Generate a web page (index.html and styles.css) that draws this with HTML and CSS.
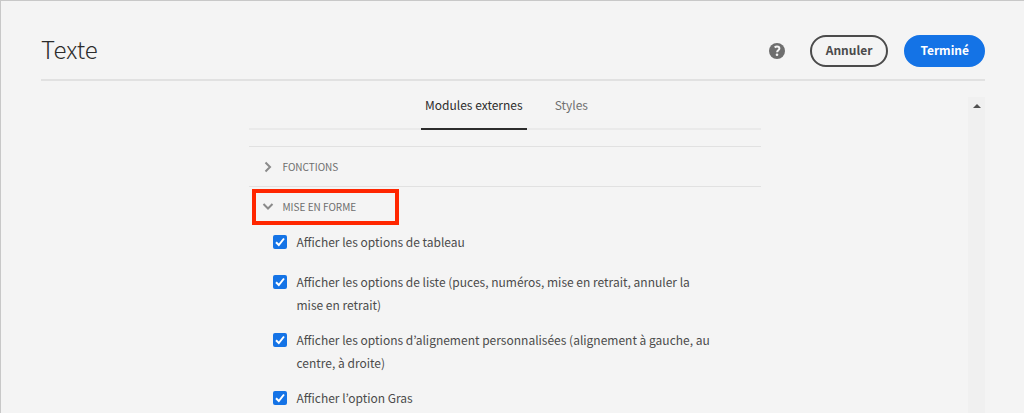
FILE: index.html
```html
<!DOCTYPE html>
<html lang="fr">
<head>
<meta charset="utf-8">
<meta name="viewport" content="width=device-width, initial-scale=1">
<title>Texte</title>
<link rel="stylesheet" href="styles.css">
</head>
<body>
<div class="page">
  <header class="header">
    <h1 class="title">Texte</h1>
    <div class="actions">
      <button class="help" type="button" aria-label="Aide">
        <svg viewBox="0 0 16 16" width="16" height="16" aria-hidden="true">
          <circle cx="8" cy="8" r="8" fill="#6e6e6e"/>
          <path d="M5.7 4.5C6.4 3.8 7.2 3.5 8 3.5c1.400 0 2.400.8 2.400 2 0 1.700-2.300 1.900-2.300 3.700" fill="none" stroke="#f4f4f4" stroke-width="2"/>
          <circle cx="8" cy="11.700" r="1.300" fill="#f4f4f4"/>
        </svg>
      </button>
      <button class="button" type="button">Annuler</button>
      <button class="button primary" type="button">Terminé</button>
    </div>
  </header>
  <div class="body">
    <main class="column">
      <div class="tabs" role="tablist">
        <button class="tab selected" type="button" role="tab" aria-selected="true">Modules externes</button>
        <button class="tab" type="button" role="tab" aria-selected="false">Styles</button>
      </div>
      <section class="group">
        <button class="group-head" type="button" aria-expanded="false">
          <svg class="chevron" viewBox="0 0 12 12" width="12" height="12" aria-hidden="true"><path d="M3.500 1.500 8 6 3.500 10.500"/></svg>
          <span>FONCTIONS</span>
        </button>
      </section>
      <section class="group">
        <button class="group-head marked" type="button" aria-expanded="true">
          <svg class="chevron" viewBox="0 0 12 12" width="12" height="12" aria-hidden="true"><path d="M1.500 4 6 8.500 10.500 4"/></svg>
          <span>MISE EN FORME</span>
        </button>
        <div class="options">
          <label class="option"><input type="checkbox" checked><span>Afficher les options de tableau</span></label>
          <label class="option"><input type="checkbox" checked><span>Afficher les options de liste (puces, numéros, mise en retrait, annuler la mise en retrait)</span></label>
          <label class="option"><input type="checkbox" checked><span>Afficher les options d’alignement personnalisées (alignement à gauche, au centre, à droite)</span></label>
          <label class="option"><input type="checkbox" checked><span>Afficher l’option Gras</span></label>
        </div>
      </section>
    </main>
    <div class="scrollbar" aria-hidden="true">
      <svg viewBox="0 0 8 4" width="8" height="4"><path d="M4 0 8 4H0z" fill="#505050"/></svg>
    </div>
  </div>
</div>
</body>
</html>
```
FILE: styles.css
```css
* {
  box-sizing: border-box;
}

body {
  margin: 0;
  background: #f4f4f4;
  color: #4b4b4b;
  font-family: "Noto Sans CJK KR", "Noto Sans", sans-serif;
  font-size: 12px;
  line-height: 23px;
}

button {
  margin: 0;
  padding: 0;
  border: 0;
  background: none;
  color: inherit;
  font: inherit;
}

.page {
  display: flex;
  flex-direction: column;
  height: 100vh;
  overflow: hidden;
  padding: 0 39px 0 40px;
  border-top: 1px solid #c8c8c8;
  border-left: 1px solid #c8c8c8;
}

.header {
  display: flex;
  flex: none;
  align-items: center;
  justify-content: space-between;
  padding: 32px 0 10px;
  border-bottom: 2px solid #e1e1e1;
}

.title {
  margin: 0;
  padding-bottom: 4px;
  color: #2c2c2c;
  font-size: 24px;
  font-weight: 200;
  line-height: 32px;
}

.actions {
  display: flex;
  align-items: center;
  gap: 16px;
}

.help {
  display: flex;
  margin-right: 9px;
}

.button {
  height: 32px;
  padding: 0 14px 2px;
  border: 2px solid #4b4b4b;
  border-radius: 16px;
  font-weight: 700;
  line-height: 26px;
}

.primary {
  border-color: #1473e6;
  background: #1473e6;
  color: #fff;
}

.body {
  display: flex;
  flex: 1;
  min-height: 0;
}

.column {
  width: 100%;
  max-width: 512px;
  margin: 0 auto;
}

.tabs {
  display: flex;
  justify-content: center;
  gap: 24px;
  margin-bottom: 16px;
  padding-left: 4px;
  border-bottom: 2px solid #eaeaea;
}

.tab {
  height: 49px;
  margin-bottom: -2px;
  padding: 0 4px;
  border-bottom: 2px solid transparent;
  color: #707070;
}

.selected {
  border-color: #2c2c2c;
  color: #2c2c2c;
}

.group {
  border-top: 1px solid #e1e1e1;
}

.group-head {
  display: flex;
  align-items: center;
  gap: 9px;
  height: 39px;
  padding-left: 13px;
  color: #6e6e6e;
  font-size: 10px;
}

.chevron {
  fill: none;
  stroke: #8a8a8a;
  stroke-width: 2;
}

.marked {
  width: 147px;
  height: 36px;
  margin: 2px 0 0 3px;
  padding: 0 0 2px 6px;
  border: 4px solid #ff2600;
}

.options {
  padding: 5px 46px 0 24px;
}

.option {
  display: flex;
  gap: 10px;
  min-height: 40px;
  padding-bottom: 12px;
}

.option input {
  flex: none;
  width: 14px;
  height: 14px;
  margin: 5px 0 0;
  border-radius: 2px;
  appearance: none;
  background: #1473e6 url("data:image/svg+xml,%3Csvg xmlns='http://www.w3.org/2000/svg' viewBox='0 0 14 14'%3E%3Cpath d='M3 7.200 5.800 10 11 3.500' fill='none' stroke='white' stroke-width='2'/%3E%3C/svg%3E");
}

.scrollbar {
  display: flex;
  flex: none;
  align-items: flex-start;
  justify-content: center;
  width: 17px;
  margin-top: 16px;
  padding-top: 7px;
  background: #f0f0f0;
}
```
